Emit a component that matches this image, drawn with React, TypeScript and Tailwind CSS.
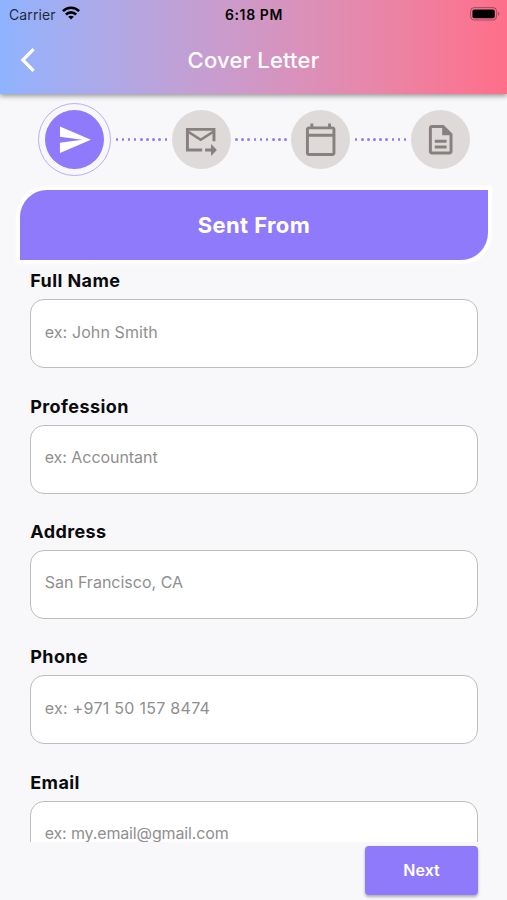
import type { ReactNode } from 'react';
import { Fragment } from 'react';
import { clsx } from 'clsx';

const steps = [
    { id: 'from', path: 'M2.01 21 23 12 2.01 3 2 10l15 2-15 2z' },
    { id: 'to', path: 'M22 4H2v16h11v-2H4V8l8 5 8-5v5h2V4zM12 11 4 6h16l-8 5zm7 4 4 4-4 4v-3h-4v-2h4v-3z' },
    { id: 'date', path: 'M20 3h-1V1h-2v2H7V1H5v2H4c-1.1 0-2 .9-2 2v16c0 1.1.9 2 2 2h16c1.1 0 2-.9 2-2V5c0-1.1-.9-2-2-2zm0 18H4V10h16v11zm0-13H4V5h16v3z' },
    { id: 'letter', path: 'M8 16h8v2H8zm0-4h8v2H8zm6-10H6c-1.1 0-2 .9-2 2v16c0 1.1.89 2 1.99 2H18c1.1 0 2-.9 2-2V8l-6-6zm4 18H6V4h7v5h5v11z' },
];

const fields = [
    { label: 'Full Name', placeholder: 'ex: John Smith', tracking: 'tracking-[0.1px]' },
    { label: 'Profession', placeholder: 'ex: Accountant', tracking: 'tracking-[-0.05px]' },
    { label: 'Address', placeholder: 'San Francisco, CA', tracking: 'tracking-normal' },
    { label: 'Phone', placeholder: 'ex: +971 50 157 8474', tracking: 'tracking-[0.28px]' },
    { label: 'Email', placeholder: 'ex: my.email@gmail.com', tracking: 'tracking-[-0.14px]' },
];

function StatusBar() {
    return (
        <div className="grid h-7 grid-cols-3 items-center pl-[9px] pr-[7px] text-[14px] text-black">
            <div className="flex items-center gap-[6px]">
                <span className="tracking-[0.1px] text-black/80">Carrier</span>
                <svg className="h-[14px] w-[18px] -translate-y-px" viewBox="0 0 18 14" fill="none" stroke="black" strokeWidth="2.6">
                    <path d="M.9 5.2C5.4.6 12.6.6 17.1 5.2" />
                    <path d="M3.9 8.5c2.9-2.9 7.3-2.9 10.2 0" />
                    <path d="M9 13.6 6.2 10.8c1.6-1.5 4-1.5 5.6 0z" fill="black" stroke="none" />
                </svg>
            </div>
            <span className="-ml-px text-center font-semibold tracking-[0.6px]">6:18 PM</span>
            <svg className="h-[14px] w-[30px] justify-self-end" viewBox="0 0 30 14">
                <rect x=".6" y=".6" width="26" height="12.4" rx="3.6" fill="none" stroke="black" strokeOpacity=".35" />
                <rect x="2.4" y="2.4" width="22.4" height="8.8" rx="2" />
                <path d="M28.2 4.8c1.6.6 1.6 3.4 0 4z" fillOpacity=".4" />
            </svg>
        </div>
    );
}

function Header() {
    return (
        <header className="relative z-10 h-[94px] shrink-0 bg-linear-to-r from-[#8fb3ff] to-[#ff6e89] shadow-[0_2px_5px_rgba(0,0,0,0.4)]">
            <StatusBar />
            <div className="grid h-[64px] grid-cols-[60px_1fr_60px] items-center">
                <button className="pl-[20px]" aria-label="Back">
                    <svg className="h-6 w-4" viewBox="0 0 16 24" fill="none" stroke="white" strokeWidth="3.2">
                        <path d="M13.6 1.2 2.8 12l10.8 10.8" />
                    </svg>
                </button>
                <h1 className="text-center text-[22px] font-medium tracking-[0.2px] text-white">Cover Letter</h1>
            </div>
        </header>
    );
}

function StepCircle({ active, children }: { active: boolean; children: ReactNode }) {
    return (
        <div
            className={clsx(
                'flex shrink-0 items-center justify-center rounded-full',
                active ? 'size-[73px] border border-[#b9adfb]' : 'size-[59px]'
            )}
        >
            <div
                className={clsx(
                    'flex size-[59px] shrink-0 items-center justify-center rounded-full',
                    active ? 'bg-[#8f7afb] text-white' : 'bg-[#dfdada] text-[#87807f]'
                )}
            >
                <svg className="size-[35.4px]" viewBox="0 0 24 24" fill="currentColor">
                    {children}
                </svg>
            </div>
        </div>
    );
}

function DottedLine() {
    return (
        <div className="flex flex-1 items-center justify-between px-[4.5px]">
            {Array.from({ length: 9 }, (_, i) => (
                <span key={i} className="size-[2.6px] rounded-full bg-[#8f7afb]" />
            ))}
        </div>
    );
}

function Stepper() {
    return (
        <div className="flex items-center pt-[9px] pr-[37px] pl-[38px]">
            {steps.map((step, i) => (
                <Fragment key={step.id}>
                    {i > 0 && <DottedLine />}
                    <StepCircle active={i === 0}>
                        <path d={step.path} />
                    </StepCircle>
                </Fragment>
            ))}
        </div>
    );
}

function Field({ label, placeholder, tracking }: (typeof fields)[number]) {
    return (
        <label className="block h-[125.3px]">
            <span className="block h-[29.5px] pt-[0.5px] text-[18px] leading-[22px] font-bold tracking-[0.42px] text-[#0b0b0d]">{label}</span>
            <input
                className={clsx(
                    'block h-[69px] w-full rounded-[14px] border border-[#bdbdbd] bg-white px-[13.5px] pb-[4px] text-[16px] outline-none placeholder:text-[#8f8f8f]',
                    tracking
                )}
                placeholder={placeholder}
            />
        </label>
    );
}

export default function App() {
    return (
        <div className="flex h-[900px] w-[507px] flex-col overflow-hidden bg-[#f8f8fa] font-[Inter,sans-serif]">
            <Header />
            <main className="h-[748px] shrink-0 overflow-hidden">
                <Stepper />
                <div className="mr-[19.5px] ml-[20.4px] mt-[14px] flex h-[70px] items-center justify-center rounded-tl-[27px] rounded-br-[27px] bg-[#8f7afb] shadow-[0_0_2px_4px_#ffffff]">
                    <h2 className="text-[22px] font-bold tracking-[0.4px] text-white">Sent From</h2>
                </div>
                <form className="pr-[29px] pl-[30.2px] pt-[9.9px]">
                    {fields.map((field) => (
                        <Field key={field.label} {...field} />
                    ))}
                </form>
            </main>
            <footer className="flex justify-end pt-[4px] pr-[29px]">
                <button className="h-[49px] w-[113px] rounded-[4px] bg-[#8f7afb] pb-[2px] text-[16px] font-semibold text-white shadow-[0_2px_3px_rgba(0,0,0,0.3)]">
                    Next
                </button>
            </footer>
        </div>
    );
}
